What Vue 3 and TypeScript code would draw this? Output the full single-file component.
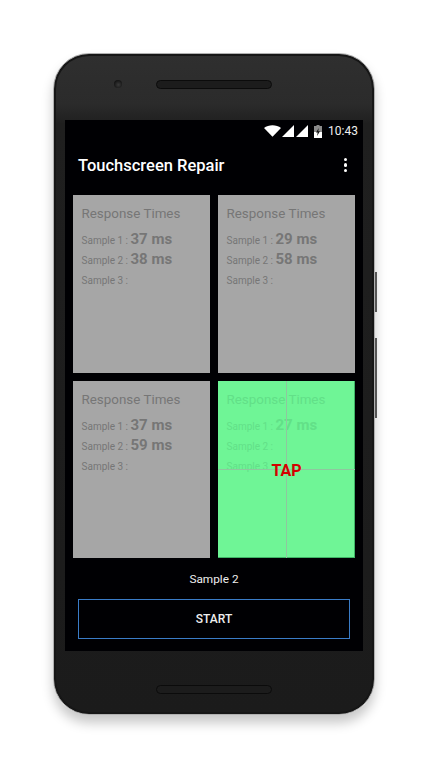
<script setup lang="ts">
interface Tile { s1: string; s2: string; active?: boolean }
const tiles: Tile[] = [
  { s1: '37 ms', s2: '38 ms' },
  { s1: '29 ms', s2: '58 ms' },
  { s1: '37 ms', s2: '59 ms' },
  { s1: '27 ms', s2: '', active: true },
]
</script>

<template>
  <div class="page">
    <div class="phone">
      <div class="keys keys-power"></div>
      <div class="keys keys-volume"></div>
      <div class="top">
        <div class="camera"></div>
        <div class="speaker"></div>
      </div>
      <div class="screen">
        <div class="status">
          <svg class="wifi" width="17" height="12" viewBox="0 0 19 13"><path d="M0 3.2C5-1 14-1 19 3.2L9.5 13Z" fill="#fff" /></svg>
          <svg class="sig" width="12" height="12" viewBox="0 0 13 13"><path d="M13 0V13H0Z" fill="#fff" /></svg>
          <svg class="sig sig-last" width="12" height="12" viewBox="0 0 13 13"><path d="M13 0V13H0Z" fill="#fff" /></svg>
          <svg class="bat" width="8" height="13" viewBox="0 0 8 13"><path d="M2.5 0h3v1H8v12H0V1h2.5Z" fill="#8a8a8a" /><path d="M0 7h8v6H0Z" fill="#fff" /><path d="M4.8 3 2 7.5h1.7L3 11l3-4.7H4.2Z" fill="#111" /></svg>
          <span class="time">10:43</span>
        </div>
        <div class="appbar">
          <span class="title">Touchscreen Repair</span>
          <div class="more"><i></i><i></i><i></i></div>
        </div>
        <div class="grid">
          <div v-for="(t, i) in tiles" :key="i" class="tile" :class="{ active: t.active }">
            <div class="heading">Response Times</div>
            <div class="row row-first"><span>Sample 1 : </span><b>{{ t.s1 }}</b></div>
            <div class="row"><span>Sample 2 : </span><b>{{ t.s2 }}</b></div>
            <div class="row"><span>Sample 3 : </span></div>
            <template v-if="t.active">
              <div class="line-v"></div>
              <div class="line-h"></div>
              <div class="tap">TAP</div>
            </template>
          </div>
        </div>
        <div class="sample">Sample 2</div>
        <div class="start">START</div>
      </div>
      <div class="bottom"><div class="speaker"></div></div>
    </div>
  </div>
</template>

<style>
body { background: #fff; }
</style>

<style scoped>
.page {
  width: 430px;
  height: 768px;
  box-sizing: border-box;
  padding: 53px 0 0 53px;
  overflow: hidden;
  font-family: Roboto, "Liberation Sans", sans-serif;
}
.phone {
  position: relative;
  width: 322px;
  height: 662px;
  box-sizing: border-box;
  border-radius: 36px;
  background: linear-gradient(180deg, #2f2f2f 0, #2b2b2b 50px, #1f1f1f 70px, #1b1b1b 100%);
  border: 1px solid #b0b0b0;
  box-shadow: 0 8px 12px rgba(0, 0, 0, 0.22), inset 0 0 0 2px #161616;
  display: flex;
  flex-direction: column;
  align-items: center;
}
.keys {
  position: absolute;
  right: -3px;
  width: 2px;
  background: #555;
}
.keys-power { top: 218px; height: 40px; }
.keys-volume { top: 284px; height: 80px; }
.top {
  height: 66px;
  width: 100%;
  flex: none;
  display: flex;
  justify-content: center;
  position: relative;
}
.camera {
  position: absolute;
  left: 60px;
  top: 26px;
  width: 8px;
  height: 8px;
  border-radius: 50%;
  background: radial-gradient(circle at 55% 60%, #3a3a3a, #141414 70%);
}
.speaker {
  width: 116px;
  height: 9px;
  margin-top: 26px;
  border-radius: 5px;
  background: #1c1c1c;
  box-sizing: border-box;
  border: 1.5px solid #0b0b0b;
}
.screen {
  width: 298px;
  height: 531px;
  flex: none;
  background: #000003;
  display: flex;
  flex-direction: column;
}
.status {
  height: 20px;
  flex: none;
  margin-top: 1px;
  padding-right: 5px;
  display: flex;
  align-items: center;
  justify-content: flex-end;
  color: #fff;
}
.status svg { flex: none; }
.wifi { margin-right: 1px; }
.sig { margin-right: 2px; }
.sig-last { margin-right: 6px; }
.bat { margin-right: 6px; }
.time { font-size: 12px; color: #f0f0f0; }
.appbar {
  height: 48px;
  flex: none;
  margin-bottom: 6px;
  padding: 0 16px 0 13px;
  display: flex;
  align-items: center;
  justify-content: space-between;
}
.title {
  color: #fff;
  font-size: 16.5px;
  font-weight: 500;
}
.more { display: flex; flex-direction: column; gap: 2px; }
.more i { width: 3.5px; height: 3.5px; border-radius: 50%; background: #fff; display: block; }
.grid {
  padding: 0 8px;
  display: grid;
  grid-template-columns: 137px 137px;
  grid-template-rows: 178px 177px;
  gap: 8px;
  flex: none;
}
.tile {
  position: relative;
  background: #a6a6a6;
  color: #767676;
  padding: 10px 8.5px;
  overflow: hidden;
}
.tile.active {
  background: #6ff596;
  color: #62e088;
  box-shadow: inset -1px -1px 0 #3fb466;
}
.heading { font-size: 13.4px; line-height: 17px; }
.row { font-size: 10px; line-height: 20.3px; height: 20.3px; white-space: nowrap; }
.row::before { content: "\200b"; font-size: 15px; font-weight: 700; }
.row-first { margin-top: 6.5px; }
.row b { font-size: 15px; font-weight: 700; }
.line-v {
  position: absolute;
  left: 68px;
  top: 0;
  bottom: 0;
  width: 1px;
  background: #8fc79f;
}
.line-h {
  position: absolute;
  left: 0;
  right: 0;
  top: 88px;
  height: 1px;
  background: #8fc79f;
}
.tap {
  position: absolute;
  left: 0;
  right: 0;
  top: 80px;
  text-align: center;
  color: #d50000;
  font-size: 16px;
  line-height: 19px;
  font-weight: 700;
}
.sample {
  color: #eee;
  font-size: 11.8px;
  line-height: 14px;
  text-align: center;
  margin-top: 14px;
}
.start {
  margin: 13px 13px 0;
  height: 40px;
  box-sizing: border-box;
  border: 1px solid #3a7cc8;
  color: #eee;
  font-size: 12px;
  font-weight: 500;
  display: flex;
  align-items: center;
  justify-content: center;
}
.bottom { flex: 1; display: flex; justify-content: center; }
.bottom .speaker { margin-top: 34px; }
</style>
